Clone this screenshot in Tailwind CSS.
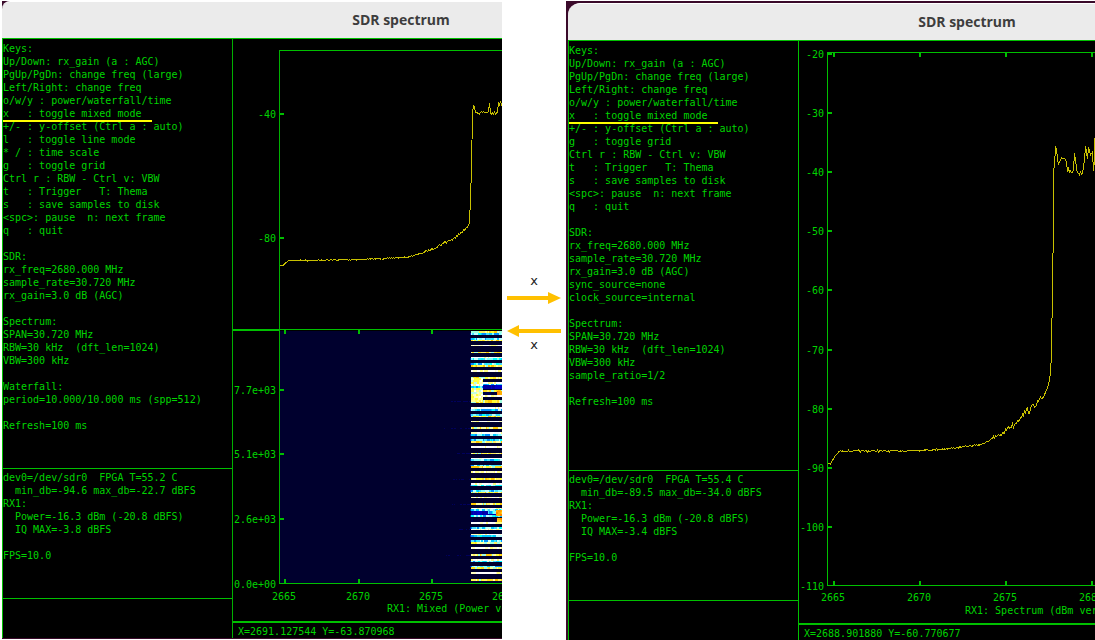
<!DOCTYPE html>
<html lang="en">
<head>
<meta charset="utf-8">
<title>SDR spectrum</title>
<script src="https://cdn.jsdelivr.net/npm/@tailwindcss/browser@4"></script>
</head>
<body class="bg-white">
<main class="flex h-screen overflow-hidden pl-0.5">

  <!-- Mixed mode window -->
  <section class="my-px flex min-w-0 flex-[500] flex-col overflow-hidden bg-[#3a0a2a] pb-px">
    <header class="h-[37px] w-[798px] shrink-0 rounded-tl-lg border-t border-white bg-[#ebebeb]">
      <h1 class="text-center font-['Open_Sans','Noto_Sans',sans-serif] text-[14px] leading-9 font-bold text-[#3d3d3d]">SDR spectrum</h1>
    </header>
    <div class="flex min-h-0 flex-1 border-t border-l border-[#00c000] bg-black font-['DejaVu_Sans_Mono',monospace] text-[10px] leading-[13px] text-[#00d400]">
      <aside class="flex w-[230px] shrink-0 flex-col border-r border-[#00b000] [&_p]:whitespace-pre">
        <div class="min-h-0 flex-1 overflow-hidden pt-[3px]">
          <p>Keys:</p>
          <p>Up/Down: rx_gain (a : AGC)</p>
          <p>PgUp/PgDn: change freq (large)</p>
          <p>Left/Right: change freq</p>
          <p>o/w/y : power/waterfall/time</p>
          <p class="relative">x   : toggle mixed mode<span class="absolute top-[13px] left-0 h-0.5 w-[149px] bg-[#ffff00]"></span></p>
          <p>+/- : y-offset (Ctrl a : auto)</p>
          <p>l   : toggle line mode</p>
          <p>* / : time scale</p>
          <p>g   : toggle grid</p>
          <p>Ctrl r : RBW - Ctrl v: VBW</p>
          <p>t   : Trigger   T: Thema</p>
          <p>s   : save samples to disk</p>
          <p>&lt;spc&gt;: pause  n: next frame</p>
          <p>q   : quit</p>
          <p class="mt-[13px]">SDR:</p>
          <p>rx_freq=2680.000 MHz</p>
          <p>sample_rate=30.720 MHz</p>
          <p>rx_gain=3.0 dB (AGC)</p>
          <p class="mt-[13px]">Spectrum:</p>
          <p>SPAN=30.720 MHz</p>
          <p>RBW=30 kHz  (dft_len=1024)</p>
          <p>VBW=300 kHz</p>
          <p class="mt-[13px]">Waterfall:</p>
          <p>period=10.000/10.000 ms (spp=512)</p>
          <p class="mt-[13px]">Refresh=100 ms</p>
        </div>
        <div class="h-[130px] shrink-0 border-t border-[#00c000] pt-0.5">
          <p>dev0=/dev/sdr0  FPGA T=55.2 C</p>
          <p>  min_db=-94.6 max_db=-22.7 dBFS</p>
          <p>RX1:</p>
          <p>  Power=-16.3 dBm (-20.8 dBFS)</p>
          <p>  IQ MAX=-3.8 dBFS</p>
          <p class="mt-[13px]">FPS=10.0</p>
        </div>
        <div class="h-10 shrink-0 border-t border-[#00c000]"></div>
      </aside>
      <div class="flex min-w-0 flex-1 flex-col">
        <div class="min-h-0 flex-1 overflow-hidden">
          <svg width="565" height="582" viewBox="233 39 565 582" fill="#00c000" role="img" aria-label="Spectrum and waterfall">
            <g shape-rendering="crispEdges">
              <rect x="280" y="331" width="518" height="252" fill="#00002e"/>
              <g id="waterfall"></g>
              <rect x="279" y="50" width="519" height="1"/>
              <rect x="279" y="50" width="1" height="534" fill="#00b000"/>
              <rect x="233" y="329" width="46" height="2"/>
              <rect x="279" y="329" width="519" height="1"/>
              <rect x="279" y="583" width="519" height="1"/>
              <path d="M280 113h4v2h-4zM280 237h4v2h-4zM280 389h4v2h-4zM280 453h4v2h-4zM280 518h4v2h-4z"/>
              <path d="M284 330h2v4h-2zM358 330h2v4h-2zM431 330h2v4h-2zM284 579h2v4h-2zM358 579h2v4h-2zM431 579h2v4h-2z"/>
              <polyline id="trace-mixed" fill="none" stroke="#c8c000" stroke-width="1"/>
            </g>
            <g fill="#00d400">
              <text x="258" y="118">-40</text>
              <text x="258" y="242">-80</text>
              <text x="234" y="394">7.7e+03</text>
              <text x="234" y="458">5.1e+03</text>
              <text x="234" y="523">2.6e+03</text>
              <text x="234" y="588">0.0e+00</text>
              <text x="272" y="600">2665</text>
              <text x="346" y="600">2670</text>
              <text x="419" y="600">2675</text>
              <text x="492" y="600">2680</text>
              <text x="387" y="612">RX1: Mixed (Power versus MHz)</text>
            </g>
          </svg>
        </div>
        <p class="h-[17px] shrink-0 overflow-hidden border-t-2 border-[#00c000] pt-0.5 pl-[5px] whitespace-pre">X=2691.127544 Y=-63.870968</p>
      </div>
    </div>
  </section>

  <!-- Key press that switches between both windows -->
  <div class="flex w-16 shrink-0 flex-col items-center justify-center pb-3.5 font-['DejaVu_Sans',sans-serif] text-[13px] leading-4 text-[#222]">
    <span>x</span>
    <svg class="mt-[3px]" width="54" height="12" viewBox="0 0 54 12" fill="#ffc000"><path d="M0 4h41V0l13 6-13 6V8H0z"/></svg>
    <svg class="mt-[21px]" width="54" height="12" viewBox="0 0 54 12" fill="#ffc000"><path d="M54 4H12V0L0 6l12 6V8h42z"/></svg>
    <span>x</span>
  </div>

  <!-- Spectrum mode window -->
  <section class="mt-px flex min-w-0 flex-[527] flex-col overflow-hidden bg-[#3a0a2a] pt-0.5 pl-0.5">
    <header class="h-[37px] w-[798px] shrink-0 rounded-tl-xl border-t border-white bg-[#ebebeb]">
      <h1 class="text-center font-['Open_Sans','Noto_Sans',sans-serif] text-[14px] leading-9 font-bold text-[#3d3d3d]">SDR spectrum</h1>
    </header>
    <div class="flex min-h-0 flex-1 border-t border-l border-[#00c000] bg-black font-['DejaVu_Sans_Mono',monospace] text-[10px] leading-[13px] text-[#00d400]">
      <aside class="flex w-[230px] shrink-0 flex-col border-r border-[#00c000] [&_p]:whitespace-pre">
        <div class="min-h-0 flex-1 overflow-hidden pt-[3px]">
          <p>Keys:</p>
          <p>Up/Down: rx_gain (a : AGC)</p>
          <p>PgUp/PgDn: change freq (large)</p>
          <p>Left/Right: change freq</p>
          <p>o/w/y : power/waterfall/time</p>
          <p class="relative">x   : toggle mixed mode<span class="absolute top-[13px] left-0 h-0.5 w-[149px] bg-[#ffff00]"></span></p>
          <p>+/- : y-offset (Ctrl a : auto)</p>
          <p>g   : toggle grid</p>
          <p>Ctrl r : RBW - Ctrl v: VBW</p>
          <p>t   : Trigger   T: Thema</p>
          <p>s   : save samples to disk</p>
          <p>&lt;spc&gt;: pause  n: next frame</p>
          <p>q   : quit</p>
          <p class="mt-[13px]">SDR:</p>
          <p>rx_freq=2680.000 MHz</p>
          <p>sample_rate=30.720 MHz</p>
          <p>rx_gain=3.0 dB (AGC)</p>
          <p>sync_source=none</p>
          <p>clock_source=internal</p>
          <p class="mt-[13px]">Spectrum:</p>
          <p>SPAN=30.720 MHz</p>
          <p>RBW=30 kHz  (dft_len=1024)</p>
          <p>VBW=300 kHz</p>
          <p>sample_ratio=1/2</p>
          <p class="mt-[13px]">Refresh=100 ms</p>
        </div>
        <div class="h-[130px] shrink-0 border-t border-[#00c000] pt-0.5">
          <p>dev0=/dev/sdr0  FPGA T=55.4 C</p>
          <p>  min_db=-89.5 max_db=-34.0 dBFS</p>
          <p>RX1:</p>
          <p>  Power=-16.3 dBm (-20.8 dBFS)</p>
          <p>  IQ MAX=-3.4 dBFS</p>
          <p class="mt-[13px]">FPS=10.0</p>
        </div>
        <div class="h-10 shrink-0 border-t border-[#00c000]"></div>
      </aside>
      <div class="flex min-w-0 flex-1 flex-col">
        <div class="min-h-0 flex-1 overflow-hidden">
          <svg width="565" height="582" viewBox="799 41 565 582" fill="#00c000" role="img" aria-label="Spectrum">
            <g shape-rendering="crispEdges">
              <rect x="827" y="52" width="537" height="1"/>
              <rect x="827" y="52" width="1" height="534"/>
              <rect x="827" y="585" width="537" height="1"/>
              <path d="M828 53h4v2h-4zM828 112h4v2h-4zM828 171h4v2h-4zM828 230h4v2h-4zM828 289h4v2h-4zM828 349h4v2h-4zM828 408h4v2h-4zM828 467h4v2h-4zM828 526h4v2h-4z"/>
              <path d="M833 53h2v4h-2zM919 53h2v4h-2zM1005 53h2v4h-2zM1091 53h2v4h-2zM833 581h2v4h-2zM919 581h2v4h-2zM1005 581h2v4h-2zM1091 581h2v4h-2z"/>
              <polyline id="trace-spectrum" fill="none" stroke="#c8c000" stroke-width="1"/>
            </g>
            <g fill="#00d400">
              <text x="806" y="58">-20</text>
              <text x="806" y="117">-30</text>
              <text x="806" y="176">-40</text>
              <text x="806" y="235">-50</text>
              <text x="806" y="294">-60</text>
              <text x="806" y="354">-70</text>
              <text x="806" y="413">-80</text>
              <text x="806" y="472">-90</text>
              <text x="800" y="531">-100</text>
              <text x="800" y="590">-110</text>
              <text x="821" y="601">2665</text>
              <text x="907" y="601">2670</text>
              <text x="993" y="601">2675</text>
              <text x="1079" y="601">2680</text>
              <text x="965" y="614">RX1: Spectrum (dBm versus MHz)</text>
            </g>
          </svg>
        </div>
        <p class="h-[17px] shrink-0 overflow-hidden border-t-2 border-[#00c000] pt-0.5 pl-[5px] whitespace-pre">X=2688.901880 Y=-60.770677</p>
      </div>
    </div>
  </section>
</main>

<script>
  let seed = 7;
  const rnd = () => (seed = (seed * 16807) % 2147483647) / 2147483647;

  // Each knot is [x, y, noise amplitude up to the next knot].
  function trace(id, knots) {
    const pts = [];
    for (let i = 0; i < knots.length - 1; i++) {
      const [x0, y0, n] = knots[i], [x1, y1] = knots[i + 1];
      const steps = n ? Math.max(1, Math.round(x1 - x0)) : 1;
      for (let s = 0; s < steps; s++) {
        const t = s / steps;
        pts.push((x0 + (x1 - x0) * t + 0.5).toFixed(1) + ',' + (y0 + (y1 - y0) * t + (s ? (rnd() - 0.5) * 2 * n : 0)).toFixed(1));
      }
    }
    const last = knots[knots.length - 1];
    pts.push(last[0] + ',' + last[1]);
    document.getElementById(id).setAttribute('points', pts.join(' '));
  }
  trace('trace-mixed', [[280,266,.3],[283,265,.3],[288,260.5,.6],[310,260.5,.6],[360,259.5,.5],[390,258.3,.3],[408,257,.5],[420,253.5,.8],[432,249,1.2],[443,243,1.5],[455,238,1.5],[458,234,1.2],[464,230,1],[467,227,0],[469,223,0],[470,198,0],[471,169,0],[472,112,0],[473,106,0],[474,107,0],[475,113,1.5],[488,112,0],[489,103,0],[490,113,1.5],[495,114,0],[497,112,0],[498,102,0],[499,106,0],[500,101,0],[501,105,0],[503,101,0]]);
  trace('trace-spectrum', [[828,463,.2],[830,464,.3],[834,457,.4],[838,452,.8],[842,451,1],[900,451,.9],[925,450,.9],[950,448.5,.8],[966,446.5,.7],[981,444.5,1],[992,438.5,1.8],[1003,433,2],[1008,427,2.5],[1014,425,2.5],[1022,414,4],[1030,409,3],[1038,401,2.5],[1043,397,0],[1047,388,0],[1049,380,0],[1050,373,0],[1051,354,0],[1051,320,0],[1052,316,0],[1052,255,0],[1053,251,0],[1053,171,0],[1054,165,0],[1055,147,0],[1056,149,0],[1057,158,0],[1058,165,1.5],[1061,158,2],[1066,162,0],[1067,172,3.5],[1073,170,0],[1074,153,0],[1076,168,0],[1077,173,4],[1082,173,0],[1084,160,0],[1085,146,0],[1087,159,0],[1088,147,0],[1090,155,0],[1092,152,0],[1093,171,0],[1094,160,0],[1094,138,0],[1097,150,0]]);

  // Waterfall bursts: [first row, row count, palette].
  const palettes = {
    w: ['#ffffff', '#ffffff', '#ffff80', '#ffffc0', '#f8f8ff'],
    y: ['#ffff30', '#ffe020', '#ffffa0', '#fff060', '#a0ffe0', '#ffc800'],
    c: ['#00ffff', '#00c8ff', '#80ffff', '#0090ff', '#c0ffff', '#40e0ff'],
    m: ['#ffffc0', '#c0ffe0', '#ffff60', '#ffffff', '#ffff40', '#ffff90'],
    b: ['#0000b0', '#0000c8', '#0000a0'],
    n: ['#00003a', '#000050'],
    o: ['#ff9800', '#ffb000', '#ff8000', '#ffd020']
  };
  const rows = [
    [331,2,'y'],[333,2,'c'],[338,2,'c'],[340,1,'y'],[345,1,'w'],[352,1,'y'],[357,1,'w'],[358,2,'c'],[363,2,'c'],[365,2,'y'],[370,2,'w'],
    [377,2,'y'],[382,2,'w'],[384,1,'c'],[385,4,'b'],[390,2,'y'],[392,3,'n'],[395,2,'w'],[400,3,'y'],
    [407,2,'w'],[409,2,'c'],[414,2,'c'],[416,1,'y'],[421,1,'w'],[427,2,'y'],[432,2,'w'],[434,2,'c'],[439,2,'c'],[441,2,'y'],[446,2,'w'],
    [453,1,'y'],[458,1,'w'],[459,2,'c'],[465,1,'c'],[466,2,'y'],[471,2,'w'],[478,2,'y'],[483,2,'w'],[485,1,'c'],[490,2,'c'],[492,1,'y'],
    [497,1,'w'],[503,2,'y'],[508,1,'w'],[509,2,'c'],[511,4,'b'],[515,2,'c'],[518,4,'n'],[522,2,'w'],[527,2,'c'],[529,1,'w'],[534,1,'w'],[535,2,'c'],
    [540,2,'c'],[542,2,'y'],[547,2,'w'],[554,2,'y'],[559,2,'w'],[561,1,'c'],[566,1,'c'],[567,2,'y'],[572,2,'w'],[579,2,'y']
  ];
  const cells = [];
  const cell = (x, y, w, h, fill) => cells.push(`<rect x="${x}" y="${y}" width="${w}" height="${h}" fill="${fill}"/>`);
  // Each run of colour spans the full height of its burst.
  const fill = (x0, x1, y, h, key) => {
    const p = palettes[key];
    for (let x = x0; x < x1;) {
      const w = Math.min(x1 - x, 1 + Math.floor(rnd() * 3));
      cell(x, y, w, h, p[Math.floor(rnd() * p.length)]);
      x += w;
    }
  };
  for (const [y, h, key] of rows) fill(471, 530, y, h, key);
  for (let y = 378; y < 402; y += 2) fill(471, 483, y, 2, 'm');
  fill(471, 483, 386, 2, 'c');
  fill(497, 530, 391, 4, 'o');
  fill(488, 496, 511, 3, 'c');
  for (let y = 510; y < 516; y += 2) fill(496, 530, y, 2, 'o');
  fill(497, 530, 518, 2, 'o');
  fill(497, 530, 520, 2, 'o');
  for (const y of [401, 428, 453, 479, 504, 529, 555])
    for (let i = 0; i < 8; i++) cell(444 + Math.floor(26 * Math.sqrt(rnd())), y, 1 + Math.floor(rnd() * 2), 1, '#00005c');
  for (const [y, h, key] of rows) if (key === 'c') cell(470, y, 1, h, '#0020b0');
  document.getElementById('waterfall').innerHTML = cells.join('');
</script>
</body>
</html>
